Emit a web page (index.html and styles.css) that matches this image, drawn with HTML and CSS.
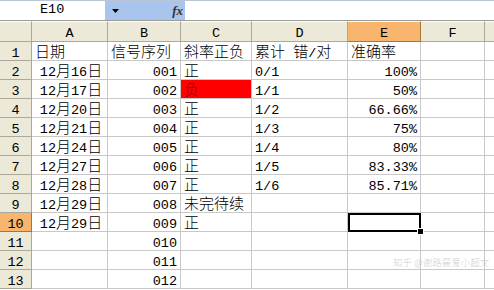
FILE: index.html
```html
<!DOCTYPE html>
<html lang="zh">

<head>
    <meta charset="UTF-8">
    <title>Sheet1</title>
    <link rel="stylesheet" href="styles.css">
</head>

<body>
    <div class="formula-bar">
        <div class="name-box">E10</div>
        <div class="name-drop">
            <svg class="arrow" width="7" height="4" viewBox="0 0 7 4"><polygon points="0,0 7,0 3.5,4" fill="#000"/></svg>
            <span class="fx">fx</span>
        </div>
        <div class="formula"></div>
    </div>

    <div class="sheet">
        <table>
            <colgroup>
                <col class="w-hd">
                <col class="w-a">
                <col class="w-b">
                <col class="w-c">
                <col class="w-d">
                <col class="w-e">
                <col class="w-f">
                <col class="w-g">
            </colgroup>
            <tr class="cols">
                <th class="corner"></th>
                <th>A</th>
                <th>B</th>
                <th>C</th>
                <th>D</th>
                <th class="sel">E</th>
                <th>F</th>
                <th></th>
            </tr>
            <tr>
                <th>1</th>
                <td><i>日期</i></td>
                <td><i>信号序列</i></td>
                <td><i>斜率正负</i></td>
                <td><i>累计</i> <i>错</i>/<i>对</i></td>
                <td><i>准确率</i></td>
                <td></td><td></td>
            </tr>
            <tr>
                <th>2</th>
                <td class="date">12<i>月</i>16<i>日</i></td>
                <td class="num">001</td>
                <td><i>正</i></td>
                <td>0/1</td>
                <td class="num">100%</td>
                <td></td><td></td>
            </tr>
            <tr>
                <th>3</th>
                <td class="date">12<i>月</i>17<i>日</i></td>
                <td class="num">002</td>
                <td class="red"><i>负</i></td>
                <td>1/1</td>
                <td class="num">50%</td>
                <td></td><td></td>
            </tr>
            <tr>
                <th>4</th>
                <td class="date">12<i>月</i>20<i>日</i></td>
                <td class="num">003</td>
                <td><i>正</i></td>
                <td>1/2</td>
                <td class="num">66.66%</td>
                <td></td><td></td>
            </tr>
            <tr>
                <th>5</th>
                <td class="date">12<i>月</i>21<i>日</i></td>
                <td class="num">004</td>
                <td><i>正</i></td>
                <td>1/3</td>
                <td class="num">75%</td>
                <td></td><td></td>
            </tr>
            <tr>
                <th>6</th>
                <td class="date">12<i>月</i>24<i>日</i></td>
                <td class="num">005</td>
                <td><i>正</i></td>
                <td>1/4</td>
                <td class="num">80%</td>
                <td></td><td></td>
            </tr>
            <tr>
                <th>7</th>
                <td class="date">12<i>月</i>27<i>日</i></td>
                <td class="num">006</td>
                <td><i>正</i></td>
                <td>1/5</td>
                <td class="num">83.33%</td>
                <td></td><td></td>
            </tr>
            <tr>
                <th>8</th>
                <td class="date">12<i>月</i>28<i>日</i></td>
                <td class="num">007</td>
                <td><i>正</i></td>
                <td>1/6</td>
                <td class="num">85.71%</td>
                <td></td><td></td>
            </tr>
            <tr>
                <th>9</th>
                <td class="date">12<i>月</i>29<i>日</i></td>
                <td class="num">008</td>
                <td><i>未完待续</i></td>
                <td></td>
                <td></td>
                <td></td><td></td>
            </tr>
            <tr>
                <th class="sel">10</th>
                <td class="date">12<i>月</i>29<i>日</i></td>
                <td class="num">009</td>
                <td><i>正</i></td>
                <td></td>
                <td class="active"><span class="handle"></span></td>
                <td></td><td></td>
            </tr>
            <tr>
                <th>11</th>
                <td></td>
                <td class="num">010</td>
                <td></td><td></td><td></td><td></td><td></td>
            </tr>
            <tr>
                <th>12</th>
                <td></td>
                <td class="num">011</td>
                <td></td><td></td><td></td><td></td><td></td>
            </tr>
            <tr>
                <th>13</th>
                <td></td>
                <td class="num">012</td>
                <td></td><td></td><td></td><td></td><td></td>
            </tr>
        </table>

        <div class="watermark">知乎 @谢路最爱小超文</div>
    </div>
</body>

</html>
```

FILE: styles.css
```css
body {
    margin: 0;
    width: 494px;
    height: 290px;
    overflow: hidden;
    background: #fff;
    font-family: "Liberation Mono", "Noto Sans CJK SC", monospace;
    font-size: 13.5px;
    color: #000;
}

.formula-bar {
    display: flex;
    height: 21px;
    box-sizing: border-box;
    border-top: 1px solid #b9c6d6;
    border-bottom: 1px solid #9a9a9a;
}

.name-box {
    width: 105px;
    line-height: 18px;
    padding-left: 40px;
    box-sizing: border-box;
}

.name-drop {
    width: 80px;
    background: #a9c5ee;
    display: flex;
    align-items: center;
    justify-content: space-between;
    padding: 0 2px 0 7px;
    box-sizing: border-box;
}

.fx {
    font-family: "Liberation Serif", serif;
    font-style: italic;
    font-weight: bold;
    font-size: 13px;
    color: #333;
}

.formula {
    flex: 1;
}

.sheet {
    position: relative;
}

table {
    border-spacing: 0;
    table-layout: fixed;
    width: 515px;
}

.w-hd { width: 32px; }
.w-a { width: 76px; }
.w-b { width: 73px; }
.w-c { width: 71px; }
.w-d { width: 96px; }
.w-e { width: 73px; }
.w-f { width: 64px; }
.w-g { width: 30px; }

th, td {
    box-sizing: border-box;
    height: 19px;
    padding: 0 3px;
    border-right: 1px solid #c8c8c8;
    border-bottom: 1px solid #c8c8c8;
    white-space: nowrap;
    line-height: 13px;
    vertical-align: bottom;
    font-weight: normal;
    overflow: visible;
}

th {
    background: #ece9d8;
    border-color: #aca899;
    text-align: center;
    padding: 0;
}

tr.cols th {
    height: 21px;
    line-height: 15px;
    border-top: 1px solid #fff;
}

th.sel {
    background: #f8b56d;
    border-color: #a0773e;
}

td i, .watermark {
    font-family: "Noto Sans CJK SC", sans-serif;
    font-size: 15px;
    font-weight: 300;
    font-style: normal;
}

td i {
    line-height: 0;
}

td.date {
    text-align: center;
    padding-left: 6px;
}

td.num {
    text-align: right;
}

td.red {
    background: #ff0000;
    color: #7a0000;
}

td.active {
    position: relative;
    border: 2px solid #000;
    outline: 1px solid #000;
    outline-offset: -1px;
}

.handle {
    position: absolute;
    right: -5px;
    bottom: -5px;
    width: 5px;
    height: 5px;
    background: #000;
    border: 1px solid #fff;
}

.watermark {
    position: absolute;
    left: 393px;
    top: 234px;
    font-size: 9.5px;
    color: rgba(190, 190, 190, 0.75);
    white-space: nowrap;
}
```
